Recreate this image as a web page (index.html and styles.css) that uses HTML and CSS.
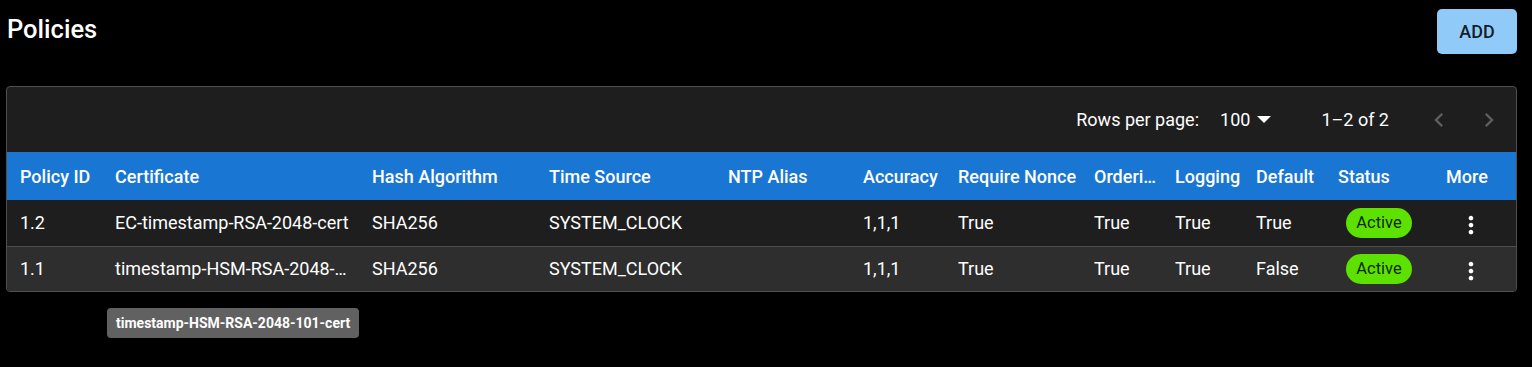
FILE: index.html
```html
<!DOCTYPE html>
<html lang="en">
<head>
<meta charset="utf-8">
<title>Policies</title>
<link rel="stylesheet" href="styles.css">
</head>
<body>
<div class="page">
  <div class="page-header">
    <h1 class="title">Policies</h1>
    <button class="add-btn">ADD</button>
  </div>
  <div class="panel">
    <div class="toolbar">
      <span class="rows-label">Rows per page:</span>
      <span class="rows-select">100
        <svg class="caret" viewBox="0 0 14 7" width="14" height="7"><path d="M0 0h14L7 7z" fill="#fff"/></svg>
      </span>
      <span class="range">1–2 of 2</span>
      <span class="pager">
        <svg class="chev" viewBox="0 0 24 24" width="28" height="28"><path d="M15.41 7.41 14 6l-6 6 6 6 1.41-1.41L10.83 12z"/></svg>
        <svg class="chev" viewBox="0 0 24 24" width="28" height="28"><path d="M10 6 8.59 7.41 13.17 12l-4.58 4.59L10 18l6-6z"/></svg>
      </span>
    </div>
    <table class="grid">
      <colgroup>
        <col class="c-id"><col class="c-cert"><col class="c-hash"><col class="c-time"><col class="c-ntp"><col class="c-acc"><col class="c-nonce"><col class="c-ord"><col class="c-log"><col class="c-def"><col class="c-status"><col class="c-more">
      </colgroup>
      <thead>
        <tr>
          <th>Policy ID</th><th>Certificate</th><th>Hash Algorithm</th><th>Time Source</th><th>NTP Alias</th><th>Accuracy</th><th>Require Nonce</th><th>Ordering</th><th>Logging</th><th>Default</th><th>Status</th><th>More</th>
        </tr>
      </thead>
      <tbody>
        <tr>
          <td>1.2</td><td class="cert-cell">EC-timestamp-RSA-2048-cert</td><td>SHA256</td><td>SYSTEM_CLOCK</td><td></td><td>1,1,1</td><td>True</td><td>True</td><td>True</td><td>True</td>
          <td class="status-cell"><span class="chip">Active</span></td>
          <td class="more-cell"><svg class="kebab" viewBox="0 0 24 24" width="28" height="28"><path d="M12 8c1.1 0 2-.9 2-2s-.9-2-2-2-2 .9-2 2 .9 2 2 2zm0 2c-1.1 0-2 .9-2 2s.9 2 2 2 2-.9 2-2-.9-2-2-2zm0 6c-1.1 0-2 .9-2 2s.9 2 2 2 2-.9 2-2-.9-2-2-2z"/></svg></td>
        </tr>
        <tr class="alt">
          <td>1.1</td><td class="cert-cell">timestamp-HSM-RSA-2048-101-cert</td><td>SHA256</td><td>SYSTEM_CLOCK</td><td></td><td>1,1,1</td><td>True</td><td>True</td><td>True</td><td>False</td>
          <td class="status-cell"><span class="chip">Active</span></td>
          <td class="more-cell"><svg class="kebab" viewBox="0 0 24 24" width="28" height="28"><path d="M12 8c1.1 0 2-.9 2-2s-.9-2-2-2-2 .9-2 2 .9 2 2 2zm0 2c-1.1 0-2 .9-2 2s.9 2 2 2 2-.9 2-2-.9-2-2-2zm0 6c-1.1 0-2 .9-2 2s.9 2 2 2 2-.9 2-2-.9-2-2-2z"/></svg></td>
        </tr>
      </tbody>
    </table>
  </div>
  <div class="tooltip">timestamp-HSM-RSA-2048-101-cert</div>
</div>
</body>
</html>
```

FILE: styles.css
```css
* { box-sizing: border-box; }
html, body {
  margin: 0;
  background: #000;
  color: #fff;
  font-family: Roboto, "Liberation Sans", Arial, sans-serif;
}
.page {
  position: relative;
  width: 1511px;
  margin-left: 6px;
  height: 367px;
}
.page-header {
  display: flex;
  justify-content: space-between;
  align-items: flex-start;
  padding-top: 9px;
  height: 86px;
}
.title {
  margin: 4px 0 0 1px;
  font-size: 25.5px;
  line-height: 32px;
  font-weight: 500;
}
.add-btn {
  width: 80px;
  height: 45px;
  border: 0;
  border-radius: 5px;
  background: #90caf9;
  color: rgba(0,0,0,0.87);
  font-family: inherit;
  font-size: 18px;
  font-weight: 500;
  padding: 0;
}
.panel {
  border: 1px solid #4f4f4f;
  border-radius: 4px;
  background: #1e1e1e;
  overflow: hidden;
}
.toolbar {
  height: 65px;
  display: flex;
  align-items: center;
  justify-content: flex-end;
  padding-right: 13px;
  font-size: 18px;
}
.rows-select {
  display: flex;
  align-items: center;
  margin-left: 21px;
}
.caret { margin-left: 7px; }
.range { margin-left: 50px; }
.pager {
  display: flex;
  gap: 22px;
  margin-left: 36px;
}
.chev { fill: #5e5e5e; }
.grid {
  width: 100%;
  table-layout: fixed;
  border-collapse: collapse;
  font-size: 18px;
}
.c-id { width: 95px; }
.c-cert { width: 257px; }
.c-hash { width: 177px; }
.c-time { width: 179px; }
.c-ntp { width: 135px; }
.c-acc { width: 95px; }
.c-nonce { width: 136px; }
.c-ord { width: 81px; }
.c-log { width: 81px; }
.c-def { width: 82px; }
.c-status { width: 108px; }
.c-more { width: 83px; }
.grid th {
  background: #1976d2;
  height: 48px;
  text-align: left;
  font-weight: 500;
  padding: 0 1px 0 13px;
  white-space: nowrap;
  overflow: hidden;
  text-overflow: ellipsis;
}
.grid td {
  height: 46px;
  padding: 0 8px 0 13px;
  border-bottom: 1px solid #4d4d4d;
  white-space: nowrap;
  overflow: hidden;
  text-overflow: ellipsis;
}
.grid tbody tr:last-child td { border-bottom: 0; height: 45px; }
.grid tr.alt td { background: #2e2e2e; }
.grid td.cert-cell { padding-right: 8px; }
.grid td.status-cell { padding: 0; text-align: center; }
.chip {
  display: inline-flex;
  align-items: center;
  justify-content: center;
  width: 66px;
  height: 30px;
  border-radius: 15px;
  background: #5de100;
  color: rgba(0,0,0,0.87);
  font-size: 16.5px;
  vertical-align: middle;
}
.grid td.more-cell { padding: 4px 0 0 24px; }
.kebab { fill: #fff; display: block; }
.tooltip {
  position: absolute;
  left: 101px;
  top: 308px;
  height: 30px;
  padding: 0 9px;
  display: flex;
  align-items: center;
  background: #616161;
  border-radius: 4px;
  font-size: 14px;
  font-weight: 700;
  color: #fff;
}
```
